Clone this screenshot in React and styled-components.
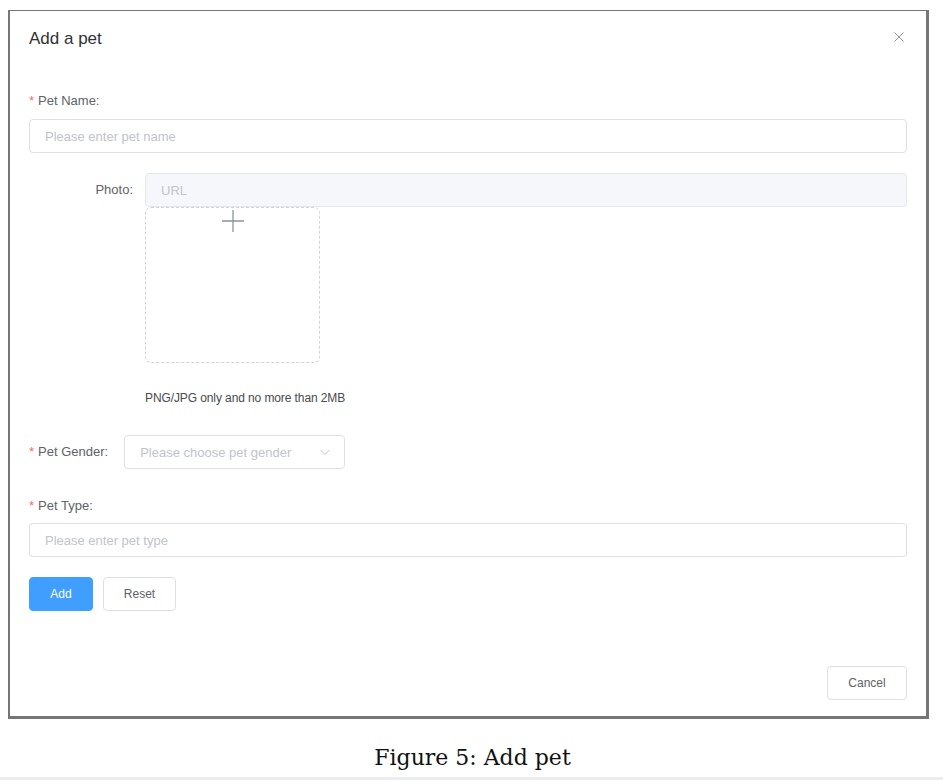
import React from "react";
import styled, { createGlobalStyle } from "styled-components";

const Global = createGlobalStyle`
  html, body { margin: 0; padding: 0; background: #ffffff; }
  body { font-family: "Liberation Sans", Arial, sans-serif; }
  * { box-sizing: border-box; }
`;

const Page = styled.div`
  width: 943px;
  height: 780px;
  display: flex;
  flex-direction: column;
  position: relative;
  overflow: hidden;
`;

const TopGap = styled.div`
  height: 10px;
`;

const Frame = styled.div`
  margin-left: 8px;
  width: 921px;
  height: 709px;
  border-style: solid;
  border-color: #767676;
  border-width: 1px 3px 3px 2px;
  background: #fff;
  display: flex;
  flex-direction: column;
  padding: 16px 19px 16px 19px;
`;

const Header = styled.div`
  display: flex;
  align-items: center;
  justify-content: space-between;
  height: 24px;
`;

const Title = styled.div`
  font-size: 17px;
  line-height: 24px;
  color: #303133;
`;

const Close = styled.button`
  border: 0;
  background: none;
  padding: 0;
  margin-right: 2px;
  margin-top: -4px;
  width: 12px;
  height: 12px;
  display: flex;
  cursor: pointer;
`;

const Body = styled.div`
  display: flex;
  flex-direction: column;
  margin-top: 40px;
  flex: 1;
`;

const Label = styled.div`
  font-size: 13px;
  line-height: 20px;
  height: 20px;
  color: #606266;
  white-space: nowrap;
  width: ${(p) => (p.$width ? p.$width : "auto")};
  text-align: ${(p) => (p.$right ? "right" : "left")};
  padding-right: ${(p) => p.$pr || "0"};
  margin-top: ${(p) => p.$mt || "0"};
  flex-shrink: 0;
`;

const Star = styled.span`
  color: #f56c6c;
  margin-right: 4px;
`;

const Input = styled.div`
  height: 34px;
  border: 1px solid #dcdfe6;
  border-radius: 4px;
  background: ${(p) => (p.$disabled ? "#f5f7fa" : "#fff")};
  border-color: ${(p) => (p.$disabled ? "#e4e7ed" : "#dcdfe6")};
  display: flex;
  align-items: center;
  padding: 0 15px;
  font-size: 13px;
  color: #c0c4cc;
  margin-top: ${(p) => p.$mt || "0"};
  width: ${(p) => p.$width || "auto"};
  flex: ${(p) => (p.$grow ? 1 : "none")};
  justify-content: space-between;
`;

const Row = styled.div`
  display: flex;
  align-items: center;
  margin-top: ${(p) => p.$mt || "0"};
`;

const PhotoBlock = styled.div`
  display: flex;
  flex-direction: column;
  margin-left: 116px;
`;

const Upload = styled.div`
  width: 175px;
  height: 156px;
  border: 1px dashed #d0d3da;
  border-radius: 6px;
  display: flex;
  justify-content: center;
  padding-top: 1px;
`;

const Help = styled.div`
  font-size: 12px;
  line-height: 18px;
  color: #4a4a4a;
  margin-top: 26px;
  letter-spacing: -0.1px;
`;

const Buttons = styled.div`
  display: flex;
  gap: 10px;
  margin-top: 20px;
`;

const Button = styled.button`
  height: 34px;
  width: ${(p) => p.$w};
  padding: 0;
  border-radius: 4px;
  font-family: "Liberation Sans", Arial, sans-serif;
  font-size: 12px;
  border: 1px solid ${(p) => (p.$primary ? "#409eff" : "#dcdfe6")};
  background: ${(p) => (p.$primary ? "#409eff" : "#fff")};
  color: ${(p) => (p.$primary ? "#fff" : "#606266")};
  cursor: pointer;
`;

const Footer = styled.div`
  display: flex;
  justify-content: flex-end;
  margin-top: auto;
`;

const Caption = styled.div`
  text-align: center;
  font-family: "DejaVu Serif", "Liberation Serif", serif;
  font-size: 22px;
  color: #111;
  margin-top: 26px;
  line-height: 26px;
  padding-left: 2px;
`;

const PageEdge = styled.div`
  position: absolute;
  left: 0;
  right: 0;
  bottom: 0;
  height: 3px;
  background: #ececf0;
`;

export default function App() {
  return (
    <Page>
      <Global />
      <TopGap />
      <Frame>
        <Header>
          <Title>Add a pet</Title>
          <Close aria-label="close">
            <svg width="12" height="12" viewBox="0 0 12 12">
              <path d="M1.5 1.5 L10.5 10.5 M10.5 1.5 L1.5 10.5" stroke="#909399" strokeWidth="1" fill="none" />
            </svg>
          </Close>
        </Header>
        <Body>
          <Label><Star>*</Star>Pet Name:</Label>
          <Input $mt="8px">Please enter pet name</Input>
          <Row $mt="20px">
            <Label $width="116px" $right $pr="12px">Photo:</Label>
            <Input $grow $disabled>URL</Input>
          </Row>
          <PhotoBlock>
            <Upload>
              <svg width="24" height="24" viewBox="0 0 24 24">
                <path d="M12 1 V23 M1 12 H23" stroke="#8c939d" strokeWidth="1.3" fill="none" />
              </svg>
            </Upload>
            <Help>PNG/JPG only and no more than 2MB</Help>
          </PhotoBlock>
          <Row $mt="28px">
            <Label $pr="16px"><Star>*</Star>Pet Gender:</Label>
            <Input $width="221px">
              <span>Please choose pet gender</span>
              <svg width="12" height="12" viewBox="0 0 12 12" style={{ marginRight: -2 }}>
                <path d="M1.5 4 L6 8.5 L10.5 4" stroke="#c0c4cc" strokeWidth="1" fill="none" />
              </svg>
            </Input>
          </Row>
          <Label $mt="27px"><Star>*</Star>Pet Type:</Label>
          <Input $mt="7px">Please enter pet type</Input>
          <Buttons>
            <Button $primary $w="64px">Add</Button>
            <Button $w="73px">Reset</Button>
          </Buttons>
          <Footer>
            <Button $w="80px">Cancel</Button>
          </Footer>
        </Body>
      </Frame>
      <Caption>Figure 5: Add pet</Caption>
      <PageEdge />
    </Page>
  );
}
